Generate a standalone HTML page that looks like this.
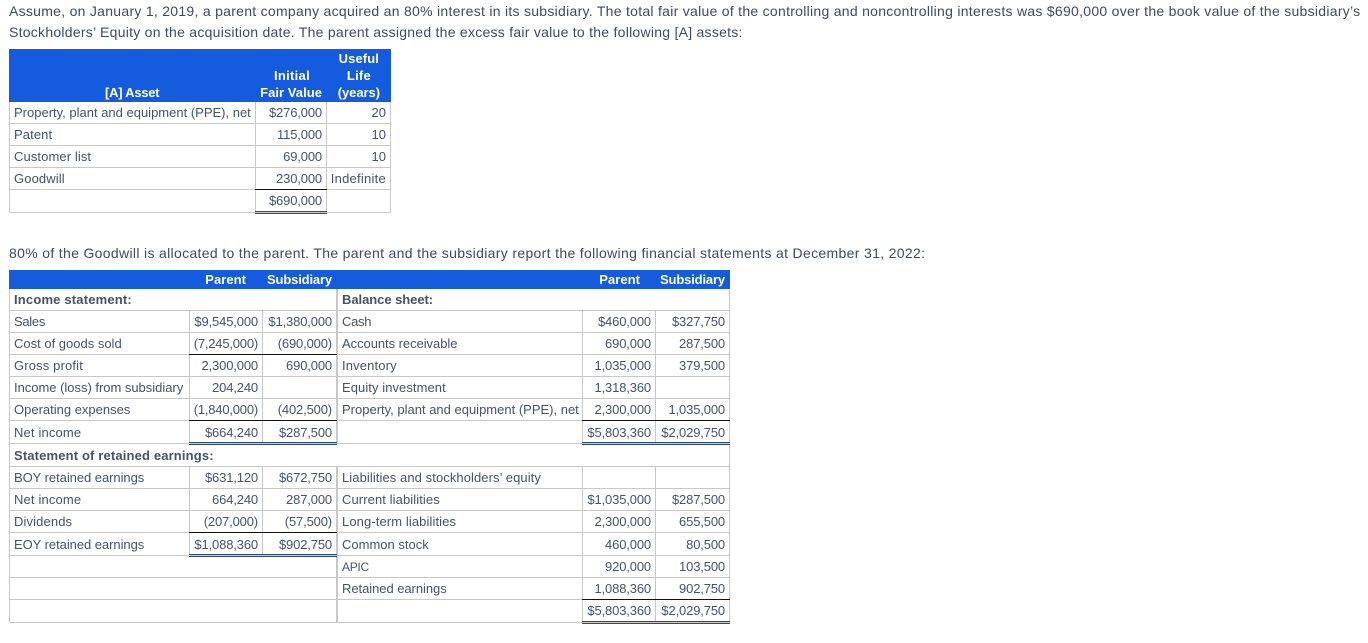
<!DOCTYPE html>
<html><head><meta charset="utf-8">
<style>
html,body{margin:0;padding:0;background:#fff}
body{width:1368px;height:643px;position:relative;overflow:hidden;font-family:"Liberation Sans",Arial,sans-serif;color:#46526a}
.p{position:absolute;left:9px;white-space:nowrap;font-size:14px;line-height:20px;color:#3f4a5e}
.h{position:absolute;background:#155bdd}
.x{position:absolute;height:1px;background:#c8c8c8}
.y{position:absolute;width:1px;background:#c8c8c8}
.k{position:absolute;height:1px;background:#111}
.d{position:absolute;height:3px;border-top:1px solid #2f4a78;border-bottom:1px solid #2f4a78;box-sizing:border-box}
.r{position:absolute;left:0;width:800px;height:20px;line-height:20px;font-size:13px;letter-spacing:0;white-space:nowrap}
.r span{position:absolute;top:0}
.w{color:#fff;font-weight:bold;letter-spacing:.05px}
.g{font-weight:bold;letter-spacing:.15px}
.a{left:14px}.t{left:342px}
.c1{right:calc(800px - 322px);letter-spacing:-.15px}.c2{right:calc(800px - 386px)}
.c3{right:calc(800px - 258px);letter-spacing:-.15px}.c4{right:calc(800px - 332px);letter-spacing:-.15px}
.c5{right:calc(800px - 651px);letter-spacing:-.15px}.c6{right:calc(800px - 725px);letter-spacing:-.15px}
</style></head><body>
<div class="p" style="top:1px;letter-spacing:.28px">Assume, on January 1, 2019, a parent company acquired an 80% interest in its subsidiary. The total fair value of the controlling and noncontrolling interests was $690,000 over the book value of the subsidiary’s</div>
<div class="p" style="top:22px;letter-spacing:.26px">Stockholders’ Equity on the acquisition date. The parent assigned the excess fair value to the following [A] assets:</div>
<div class="p" style="top:243px;letter-spacing:.33px">80% of the Goodwill is allocated to the parent. The parent and the subsidiary report the following financial statements at December 31, 2022:</div>

<!-- table 1 -->
<div class="h" style="left:9px;top:49px;width:382px;height:53px"></div>
<div class="x" style="left:9px;top:123px;width:382px"></div>
<div class="x" style="left:9px;top:145px;width:382px"></div>
<div class="x" style="left:9px;top:167px;width:382px"></div>
<div class="x" style="left:9px;top:189px;width:382px"></div>
<div class="x" style="left:9px;top:212px;width:382px"></div>
<div class="y" style="left:9px;top:102px;height:111px"></div>
<div class="y" style="left:255px;top:102px;height:111px"></div>
<div class="y" style="left:326px;top:102px;height:111px"></div>
<div class="y" style="left:390px;top:102px;height:111px"></div>
<div class="k" style="left:255px;top:189px;width:72px"></div>
<div class="d" style="left:255px;top:211px;width:72px"></div>

<div class="r w" style="top:49px"><span style="right:calc(800px - 379px);letter-spacing:.1px">Useful</span></div>
<div class="r w" style="top:66px"><span style="right:calc(800px - 310px);letter-spacing:.3px">Initial</span><span style="right:calc(800px - 371px);letter-spacing:.25px">Life</span></div>
<div class="r w" style="top:83px"><span style="left:105px;letter-spacing:-.25px">[A] Asset</span><span class="c1" style="letter-spacing:.05px">Fair Value</span><span style="right:calc(800px - 380px);letter-spacing:-.05px">(years)</span></div>
<div class="r" style="top:103px"><span class="a">Property, plant and equipment (PPE), net</span><span class="c1">$276,000</span><span class="c2">20</span></div>
<div class="r" style="top:125px"><span class="a" style="letter-spacing:.1px">Patent</span><span class="c1">115,000</span><span class="c2">10</span></div>
<div class="r" style="top:147px"><span class="a" style="letter-spacing:.1px">Customer list</span><span class="c1">69,000</span><span class="c2">10</span></div>
<div class="r" style="top:169px"><span class="a" style="letter-spacing:.12px">Goodwill</span><span class="c1">230,000</span><span class="c2" style="letter-spacing:.25px">Indefinite</span></div>
<div class="r" style="top:191px"><span class="c1">$690,000</span></div>

<!-- table 2 -->
<div class="h" style="left:9px;top:270px;width:721px;height:19px"></div>
<div class="x" style="left:9px;top:310px;width:721px"></div>
<div class="x" style="left:9px;top:332px;width:721px"></div>
<div class="x" style="left:9px;top:354px;width:721px"></div>
<div class="x" style="left:9px;top:376px;width:721px"></div>
<div class="x" style="left:9px;top:398px;width:721px"></div>
<div class="x" style="left:9px;top:420px;width:721px"></div>
<div class="x" style="left:9px;top:443px;width:721px"></div>
<div class="x" style="left:9px;top:466px;width:721px"></div>
<div class="x" style="left:9px;top:488px;width:721px"></div>
<div class="x" style="left:9px;top:510px;width:721px"></div>
<div class="x" style="left:9px;top:532px;width:721px"></div>
<div class="x" style="left:9px;top:555px;width:721px"></div>
<div class="x" style="left:9px;top:577px;width:721px"></div>
<div class="x" style="left:9px;top:599px;width:721px"></div>
<div class="x" style="left:9px;top:622px;width:721px"></div>
<div class="y" style="left:9px;top:289px;height:334px"></div>
<div class="y" style="left:729px;top:289px;height:334px"></div>
<div class="y" style="left:189px;top:310px;height:133px"></div>
<div class="y" style="left:262px;top:310px;height:133px"></div>
<div class="y" style="left:189px;top:466px;height:89px"></div>
<div class="y" style="left:262px;top:466px;height:89px"></div>
<div class="y" style="left:336px;top:289px;height:154px;width:2px"></div>
<div class="y" style="left:336px;top:466px;height:156px;width:2px"></div>
<div class="y" style="left:582px;top:310px;height:133px"></div>
<div class="y" style="left:655px;top:310px;height:133px"></div>
<div class="y" style="left:582px;top:466px;height:156px"></div>
<div class="y" style="left:655px;top:466px;height:156px"></div>
<div class="k" style="left:189px;top:354px;width:148px"></div>
<div class="k" style="left:189px;top:420px;width:148px"></div>
<div class="k" style="left:189px;top:532px;width:148px"></div>
<div class="k" style="left:582px;top:420px;width:148px"></div>
<div class="k" style="left:582px;top:599px;width:148px"></div>
<div class="d" style="left:189px;top:442px;width:148px"></div>
<div class="d" style="left:189px;top:554px;width:148px"></div>
<div class="d" style="left:582px;top:442px;width:148px"></div>
<div class="d" style="left:582px;top:621px;width:148px"></div>

<div class="r w" style="top:270px"><span style="right:calc(800px - 246px)">Parent</span><span class="c4">Subsidiary</span><span style="right:calc(800px - 640px)">Parent</span><span class="c6">Subsidiary</span></div>
<div class="r g" style="top:290px"><span class="a" style="letter-spacing:.18px">Income statement:</span><span class="t" style="letter-spacing:-.05px">Balance sheet:</span></div>
<div class="r" style="top:312px"><span class="a" style="letter-spacing:-.3px">Sales</span><span class="c3">$9,545,000</span><span class="c4">$1,380,000</span><span class="t" style="letter-spacing:-.3px">Cash</span><span class="c5">$460,000</span><span class="c6">$327,750</span></div>
<div class="r" style="top:334px"><span class="a">Cost of goods sold</span><span class="c3" style="letter-spacing:-.2px">(7,245,000)</span><span class="c4">(690,000)</span><span class="t" style="letter-spacing:-.05px">Accounts receivable</span><span class="c5">690,000</span><span class="c6">287,500</span></div>
<div class="r" style="top:356px"><span class="a" style="letter-spacing:.15px">Gross profit</span><span class="c3">2,300,000</span><span class="c4">690,000</span><span class="t" style="letter-spacing:.14px">Inventory</span><span class="c5">1,035,000</span><span class="c6">379,500</span></div>
<div class="r" style="top:378px"><span class="a" style="letter-spacing:-.02px">Income (loss) from subsidiary</span><span class="c3">204,240</span><span class="t" style="letter-spacing:.07px">Equity investment</span><span class="c5">1,318,360</span></div>
<div class="r" style="top:400px"><span class="a">Operating expenses</span><span class="c3" style="letter-spacing:-.2px">(1,840,000)</span><span class="c4">(402,500)</span><span class="t">Property, plant and equipment (PPE), net</span><span class="c5">2,300,000</span><span class="c6">1,035,000</span></div>
<div class="r" style="top:423px"><span class="a" style="letter-spacing:.15px">Net income</span><span class="c3">$664,240</span><span class="c4">$287,500</span><span class="c5">$5,803,360</span><span class="c6">$2,029,750</span></div>
<div class="r g" style="top:446px"><span class="a">Statement of retained earnings:</span></div>
<div class="r" style="top:468px"><span class="a" style="letter-spacing:-.05px">BOY retained earnings</span><span class="c3">$631,120</span><span class="c4">$672,750</span><span class="t" style="letter-spacing:.08px">Liabilities and stockholders’ equity</span></div>
<div class="r" style="top:490px"><span class="a" style="letter-spacing:.15px">Net income</span><span class="c3">664,240</span><span class="c4">287,000</span><span class="t" style="letter-spacing:.09px">Current liabilities</span><span class="c5">$1,035,000</span><span class="c6">$287,500</span></div>
<div class="r" style="top:512px"><span class="a" style="letter-spacing:.12px">Dividends</span><span class="c3">(207,000)</span><span class="c4">(57,500)</span><span class="t" style="letter-spacing:.1px">Long-term liabilities</span><span class="c5">2,300,000</span><span class="c6">655,500</span></div>
<div class="r" style="top:535px"><span class="a" style="letter-spacing:-.05px">EOY retained earnings</span><span class="c3">$1,088,360</span><span class="c4">$902,750</span><span class="t">Common stock</span><span class="c5">460,000</span><span class="c6">80,500</span></div>
<div class="r" style="top:557px"><span class="t" style="font-size:12px;letter-spacing:-.3px">APIC</span><span class="c5">920,000</span><span class="c6">103,500</span></div>
<div class="r" style="top:579px"><span class="t" style="letter-spacing:-.05px">Retained earnings</span><span class="c5">1,088,360</span><span class="c6">902,750</span></div>
<div class="r" style="top:601px"><span class="c5">$5,803,360</span><span class="c6">$2,029,750</span></div>
</body></html>
